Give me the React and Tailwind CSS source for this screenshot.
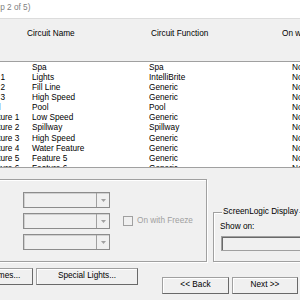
import React from 'react'

const rows = [
  ['Spa', 'Spa', 'Spa'],
  ['Aux 1', 'Lights', 'IntelliBrite'],
  ['Aux 2', 'Fill Line', 'Generic'],
  ['Aux 3', 'High Speed', 'Generic'],
  ['Pool', 'Pool', 'Pool'],
  ['Feature 1', 'Low Speed', 'Generic'],
  ['Feature 2', 'Spillway', 'Spillway'],
  ['Feature 3', 'High Speed', 'Generic'],
  ['Feature 4', 'Water Feature', 'Generic'],
  ['Feature 5', 'Feature 5', 'Generic'],
  ['Feature 6', 'Feature 6', 'Generic'],
]

function Combo() {
  return (
    <div className="w-[87px] h-[16px] shrink-0 border border-[#8c8c8c] bg-[#f0f0f0] shadow-[inset_1px_1px_0_#d0d0d0] flex justify-end">
      <div className="w-[13px] h-full border-l border-[#a0a0a0] flex items-center justify-center">
        <svg width="5" height="3" viewBox="0 0 5 3">
          <path d="M0 0h5L2.5 3z" fill="#a0a0a0" />
        </svg>
      </div>
    </div>
  )
}

function Button({ children, className = '' }) {
  return (
    <div className={`h-[17px] shrink-0 border border-[#a0a0a0] border-r-[#696969] border-b-[#696969] bg-[#f0f0f0] shadow-[inset_1px_1px_0_#ffffff] flex items-center justify-center whitespace-nowrap overflow-hidden ${className}`}>
      {children}
    </div>
  )
}

export default function App() {
  return (
    <div className="w-[300px] h-[300px] overflow-hidden bg-[#f0f0f0] font-['Liberation_Sans',Arial,sans-serif] text-[8.25px] leading-none text-black">
      {/* wizard header */}
      <div className="h-[19px] bg-white border-b border-[#dcdcdc] pt-[4px] whitespace-nowrap">
        <span className="-ml-[15px] inline-block text-[#808080]">(Step 2 of 5)</span>
      </div>

      {/* list column headers */}
      <div className="h-[43px] border-b border-[#a0a0a0] pt-[11px] flex whitespace-nowrap">
        <div className="pl-[27px] w-[151px] shrink-0">Circuit Name</div>
        <div className="w-[131px] shrink-0">Circuit Function</div>
        <div className="shrink-0">On with Freeze</div>
      </div>

      {/* list */}
      <div className="h-[106px] bg-white border-b border-[#a0a0a0] pt-[1px] overflow-hidden">
        {rows.map((r, i) => (
          <div key={i} className="h-[10.1px] flex items-center whitespace-nowrap">
            <div className="-ml-[16px] w-[48px] shrink-0">{r[0]}</div>
            <div className="w-[117px] shrink-0">{r[1]}</div>
            <div className="w-[143px] shrink-0">{r[2]}</div>
            <div className="shrink-0">No</div>
          </div>
        ))}
      </div>

      {/* lower group boxes */}
      <div className="flex items-start">
        <div className="-ml-[10px] mt-[11px] w-[217px] h-[83px] shrink-0 border border-[#a0a0a0] shadow-[1px_1px_0_#ffffff,inset_1px_1px_0_#ffffff] pl-[32px] pt-[12px] flex flex-col gap-[5px]">
          <Combo />
          <div className="flex items-center">
            <Combo />
            <div className="ml-[13px] w-[10px] h-[10px] border border-[#a0a0a0] bg-[#f0f0f0]" />
            <span className="ml-[4px] text-[#a0a0a0] whitespace-nowrap">On with Freeze</span>
          </div>
          <Combo />
        </div>

        <div className="relative ml-[6px] mt-[44px] w-[100px] h-[50px] shrink-0 border border-[#a0a0a0] shadow-[1px_1px_0_#ffffff,inset_1px_1px_0_#ffffff] pl-[6px]">
          <span className="absolute left-[8px] -top-[5px] px-[1px] bg-[#f0f0f0] whitespace-nowrap">ScreenLogic Display</span>
          <div className="mt-[9px] h-[9px] leading-[9px] whitespace-nowrap">Show on:</div>
          <div className="mt-[5px] ml-[1px] w-[90px] h-[15px] border border-[#a0a0a0] shadow-[inset_1px_1px_0_#696969] bg-[#f0f0f0]" />
        </div>
      </div>

      {/* buttons */}
      <div className="flex items-start mt-[6px]">
        <Button className="-ml-[51px] w-[84px]">Circuit Names...</Button>
        <Button className="ml-[3px] w-[102px]">Special Lights...</Button>
        <Button className="ml-[24px] mt-[9px] w-[67px]">&lt;&lt; Back</Button>
        <Button className="ml-[3px] mt-[9px] w-[66px]">Next &gt;&gt;</Button>
      </div>
    </div>
  )
}
